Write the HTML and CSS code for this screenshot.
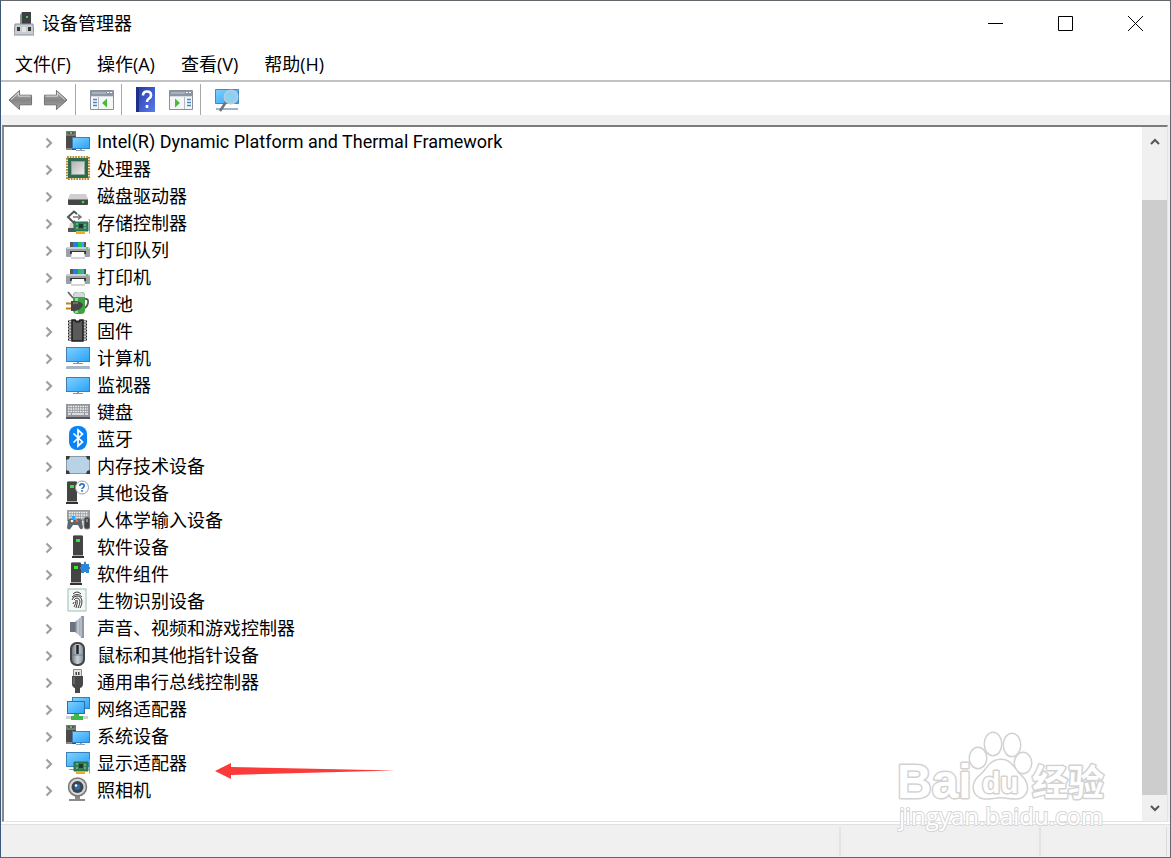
FILE: index.html
```html
<!DOCTYPE html>
<html lang="zh-CN">
<head>
    <meta charset="UTF-8">
    <title>设备管理器</title>
    <link rel="stylesheet" href="styles.css">
</head>
<body>
<svg class="defs" aria-hidden="true">
    <defs>
        <linearGradient id="screen" x1="0" y1="0" x2="1" y2="1">
            <stop offset="0" stop-color="#7fd0ff"/>
            <stop offset="1" stop-color="#2ba3f7"/>
        </linearGradient>
        <linearGradient id="metal" x1="0" y1="0" x2="1" y2="1">
            <stop offset="0" stop-color="#b4b4b4"/>
            <stop offset="1" stop-color="#ececec"/>
        </linearGradient>
        <linearGradient id="steel" x1="0" y1="0" x2="1" y2="0">
            <stop offset="0" stop-color="#6f7985"/>
            <stop offset="0.5" stop-color="#c9d0d8"/>
            <stop offset="1" stop-color="#8a939e"/>
        </linearGradient>
        <linearGradient id="arrow" x1="0" y1="0" x2="0" y2="1">
            <stop offset="0" stop-color="#b5b5b5"/>
            <stop offset="0.5" stop-color="#858585"/>
            <stop offset="1" stop-color="#a8a8a8"/>
        </linearGradient>
        <linearGradient id="help" x1="0" y1="0" x2="1" y2="1">
            <stop offset="0" stop-color="#2338a8"/>
            <stop offset="1" stop-color="#5a7be8"/>
        </linearGradient>
        <symbol id="i-chevron" viewBox="0 0 8 12">
            <path d="M1.5 1.5L6 6L1.5 10.5" fill="none" stroke="#a0a0a0" stroke-width="2.2"/>
        </symbol>
        <symbol id="i-system" viewBox="0 0 24 24">
            <path d="M0 2h10v19H0z" fill="#4a4a4a"/>
            <path d="M0 2h10v5H0z" fill="#777"/>
            <path d="M2 4h6" stroke="#333"/>
            <path d="M4 3h2v2H4z" fill="#4fd04f"/>
            <path d="M0 19h6v2H0z" fill="#888"/>
            <path d="M6 8h18v12H6z" fill="#3a7fb8"/>
            <path d="M7 9h16v10H7z" fill="url(#screen)"/>
            <path d="M14 20h2v1h3v1h-9v-1h4z" fill="#8aa0b4"/>
        </symbol>
        <symbol id="i-cpu" viewBox="0 0 24 24">
            <rect x="1" y="1" width="22" height="22" fill="none" stroke="#b8862a" stroke-width="2" stroke-dasharray="1.7 1.05"/>
            <rect x="2" y="2" width="20" height="20" fill="#2f6b4f"/>
            <rect x="5" y="5" width="14" height="14" fill="#8aa898"/>
            <rect x="6" y="6" width="12" height="12" fill="url(#metal)"/>
        </symbol>
        <symbol id="i-disk" viewBox="0 0 24 24">
            <path d="M4 11h16l2 5H2z" fill="#cfcfcf"/>
            <path d="M2 16h20v5q0 1-1 1H3q-1 0-1-1z" fill="#444"/>
            <path d="M2 16h20v1H2z" fill="#888"/>
            <circle cx="17" cy="19" r="1.3" fill="#3fe03f"/>
        </symbol>
        <symbol id="i-card" viewBox="0 0 24 24">
            <path d="M8 12h14v9H8z" fill="#2f8057"/>
            <path d="M8 12h14v9H8z" fill="none" stroke="#2a6e4a"/>
            <path d="M13 14h4v4h-4z" fill="#1d3b2b"/>
            <path d="M10 14h2M10 18h2M18 15h2M18 18h2" stroke="#9fd8b4"/>
            <path d="M10 21h9v3h-9z" fill="#f5a623"/>
            <path d="M22.5 9.500h1v14" fill="none" stroke="#9a9a9a"/>
        </symbol>
        <symbol id="i-storage" viewBox="0 0 24 24">
            <path d="M4 13h11v8H2z" fill="#d6d6d6"/>
            <path d="M2 18h9v4H2z" fill="#555"/>
            <path d="M11 4L8 1.500L2 7l5.500 5.500L9 11" fill="none" stroke="#555" stroke-width="2"/>
            <path d="M7 7h8M12 4.500L15 7l-3 2.500" fill="none" stroke="#777" stroke-width="1.500"/>
            <use href="#i-card"/>
        </symbol>
        <symbol id="i-printer" viewBox="0 0 24 24">
            <path d="M4 5h16v5H4z" fill="#555"/>
            <path d="M7 5h5v5H7z" fill="#1f7fe8"/>
            <path d="M12 5h3v5h-3z" fill="#2fbf4f"/>
            <path d="M15 5h3v5h-3z" fill="#36a5f5"/>
            <path d="M1 10h22l1 2v7q0 1-1 1H1q-1 0-1-1v-7z" fill="#9ca1a5"/>
            <path d="M1 10h22v2H1z" fill="#ccd0d2"/>
            <path d="M4 14h16v3H4z" fill="#333"/>
            <path d="M6 15h12l1 6H5z" fill="#fff"/>
            <path d="M5 21h14" stroke="#aaa"/>
            <path d="M20 10h2v2h-2z" fill="#3fe03f"/>
        </symbol>
        <symbol id="i-battery" viewBox="0 0 24 24">
            <path d="M18 8q5-1 4 4q-1 5-6 6" fill="none" stroke="#555" stroke-width="1.800"/>
            <path d="M2 1l5 6" stroke="#666" stroke-width="1.800"/>
            <rect x="7" y="1" width="12" height="22" rx="4" fill="#3da33f"/>
            <path d="M7 6q0-5 6-5t6 5z" fill="#d4d8e4"/>
            <path d="M9 7h3v15H9z" fill="#91dc84"/>
            <path d="M0 12.500h6M0 17.500h6" stroke="#b8841c" stroke-width="2"/>
            <path d="M5 10h4q6 0 8 4q-2 5-8 6H5z" fill="#454545"/>
            <path d="M7 12h5" stroke="#999"/>
        </symbol>
        <symbol id="i-firmware" viewBox="0 0 24 24">
            <path d="M2 3.500h19M2 6.500h19M2 9.500h19M2 12.500h19M2 15.500h19M2 18.500h19M2 21.500h19" stroke="#1c1c1c" stroke-width="2"/>
            <path d="M3 3.500h17M3 6.500h17M3 9.500h17M3 12.500h17M3 15.500h17M3 18.500h17M3 21.500h17" stroke="#c4c4c4"/>
            <path d="M6 2h3q0 2 2.500 2T14 2h3v21H6z" fill="#5a5a5a" stroke="#1c1c1c" stroke-width="1.500"/>
        </symbol>
        <symbol id="i-computer" viewBox="0 0 24 24">
            <path d="M0 2h24v15H0z" fill="#3a7fb8"/>
            <path d="M1 3h22v13H1z" fill="url(#screen)"/>
            <path d="M11 17h2v1h4v1H7v-1h4z" fill="#7f97ab"/>
            <path d="M1 21h22l1 1v2H0v-2z" fill="#a5b8c8"/>
        </symbol>
        <symbol id="i-monitor" viewBox="0 0 24 24">
            <path d="M0 5h24v15H0z" fill="#3a7fb8"/>
            <path d="M1 6h22v13H1z" fill="url(#screen)"/>
            <path d="M11 20h2v1h4v1H7v-1h4z" fill="#7f97ab"/>
        </symbol>
        <symbol id="i-keyboard" viewBox="0 0 24 24">
            <path d="M0 5h24v13H0z" fill="#90969c"/>
            <path d="M0 18h24v2H0z" fill="#50565c"/>
            <path d="M2 7.500h20M2 10h20M2 12.500h20" stroke="#f2f2f2" stroke-width="1.300" stroke-dasharray="1.600 0.800"/>
            <path d="M2 15h3M6 15h12M19 15h3" stroke="#f2f2f2" stroke-width="1.300"/>
        </symbol>
        <symbol id="i-bluetooth" viewBox="0 0 24 24">
            <rect x="3" y="0" width="18" height="24" rx="8" fill="#0a84f5"/>
            <path d="M7.500 7.500l9 8.500l-4.500 4V4l4.500 4l-9 8.500" fill="none" stroke="#fff" stroke-width="1.700"/>
        </symbol>
        <symbol id="i-memory" viewBox="0 0 24 24">
            <rect x="0.500" y="3.500" width="23" height="17" rx="1" fill="#b8d2e6" stroke="#8a9aa6"/>
            <path d="M0 3h4l-1 3l-3 1zM24 3h-4l1 3l3 1zM0 21h4l-1-3l-3-1zM24 21h-4l1-3l3-1z" fill="#3c3c3c"/>
        </symbol>
        <symbol id="i-tower" viewBox="0 0 24 24">
            <path d="M7 2h10v19H7z" fill="#444"/>
            <path d="M7 2h10l-1-1H8z" fill="#888"/>
            <path d="M6 22h12v2H6z" fill="#333"/>
            <path d="M7 21h10v1H7z" fill="#aaa"/>
            <path d="M10 5h4v3h-4z" fill="#35e835"/>
        </symbol>
        <symbol id="i-other" viewBox="0 0 24 24">
            <use href="#i-tower" x="-6"/>
            <circle cx="16" cy="7.500" r="6.500" fill="#fff" stroke="#9aa0a6"/>
            <path d="M13.800 6q0-2.200 2.200-2.200t2.200 2q0 1-1.100 1.800t-1.100 1.400M16 10v1.700" fill="none" stroke="#2878c8" stroke-width="1.700"/>
        </symbol>
        <symbol id="i-hid" viewBox="0 0 24 24">
            <path d="M1 3h23v11H1z" fill="#9a9fa5"/>
            <path d="M3 5.500h19M3 8h19M3 10.500h19" stroke="#f4f4f4" stroke-width="1.300" stroke-dasharray="1.600 0.800"/>
            <path d="M2 13q4-3 6 0h2q4-3 6 1l1 7q-2 3-4-1l-1-2H7l-2 3q-2 3-4 0z" fill="#5c666f"/>
            <circle cx="6" cy="14" r="1.300" fill="#fff"/>
            <circle cx="11" cy="14" r="1.300" fill="#e8643c"/>
            <path d="M6 9h3v3H6z" fill="#36a5f5"/>
            <rect x="18" y="10" width="6" height="12" rx="2.500" fill="#444" stroke="#888"/>
            <path d="M21 12v3" stroke="#ccc"/>
        </symbol>
        <symbol id="i-component" viewBox="0 0 24 24">
            <use href="#i-tower" x="-2"/>
            <path d="M15 3h3V1q1-1 2 0v2h3v3h1v2h-1v4h-3v-1h-2v1h-3V8h-1V6h1z" fill="#2b88d8"/>
        </symbol>
        <symbol id="i-finger" viewBox="0 0 24 24">
            <rect x="2" y="1" width="18" height="22" fill="#f4f8f7" stroke="#9cc0b8"/>
            <path d="M7 6q4-4 8 0M6 9q5-5 10 0M6 12q1-4 5-4t5 5q0 4-2 7M8 12q1-2 3-2t3 3q0 3-2 7M7 16l1-2M8 19q2-3 2-7M11 12q1 2-1 8" fill="none" stroke="#3c3c3c"/>
        </symbol>
        <symbol id="i-sound" viewBox="0 0 24 24">
            <path d="M4 7h5v10H4z" fill="#6a7480"/>
            <path d="M9 7l6-5v20l-6-5z" fill="url(#steel)"/>
            <path d="M15 1h3v22h-3z" fill="#8d98a4"/>
            <path d="M15 2v20" stroke="#d5dbe0"/>
        </symbol>
        <symbol id="i-mouse" viewBox="0 0 24 24">
            <rect x="4" y="0" width="15" height="24" rx="6.500" fill="#444"/>
            <rect x="6" y="2" width="11" height="20" rx="5" fill="url(#steel)"/>
            <path d="M6 13h11" stroke="#6f7c88"/>
            <path d="M11.500 3v9" stroke="#222" stroke-width="2.500"/>
        </symbol>
        <symbol id="i-usb" viewBox="0 0 24 24">
            <path d="M7.500 0.500h8V8h-8z" fill="#e4e4e4" stroke="#8a8a8a"/>
            <path d="M9.500 3h1.500v3H9.500zM12 3h1.500v3H12z" fill="#444"/>
            <path d="M6 7h11v8q0 3-3 4v5H9v-5q-3-1-3-4z" fill="#484848"/>
            <path d="M8 8v7" stroke="#888"/>
        </symbol>
        <symbol id="i-network" viewBox="0 0 24 24">
            <path d="M6 1h18v12H6z" fill="#3a7fb8"/>
            <path d="M7 2h16v10H7z" fill="url(#screen)"/>
            <path d="M1 5h18v13H1z" fill="#2a6fa8"/>
            <path d="M2 6h16v11H2z" fill="url(#screen)"/>
            <path d="M9 18h3v2h10v3H0v-3h9z" fill="#d2d2d2"/>
            <path d="M8 18h5v2h4v4H5v-4h3z" fill="#3fb84a"/>
        </symbol>
        <symbol id="i-display" viewBox="0 0 24 24">
            <path d="M0 2h24v15H0z" fill="#3a7fb8"/>
            <path d="M1 3h22v13H1z" fill="url(#screen)"/>
            <path d="M3 19h7v1H3z" fill="#8aa0b4"/>
            <use href="#i-card"/>
        </symbol>
        <symbol id="i-camera" viewBox="0 0 24 24">
            <path d="M9 18h5v4h5v2H3v-2h6z" fill="#8a8a8a"/>
            <circle cx="11.500" cy="10" r="9" fill="#d5d5d5" stroke="#777" stroke-width="1.500"/>
            <circle cx="11.500" cy="10" r="6" fill="#3c444c"/>
            <circle cx="11.500" cy="10" r="3" fill="#2b6ca8"/>
            <circle cx="10" cy="8.500" r="1.300" fill="#fff"/>
        </symbol>
        <symbol id="i-back" viewBox="0 0 26 22">
            <path d="M1 11L12 1v5h12.500v10H12v5z" fill="url(#arrow)" stroke="#6e6e6e" stroke-linejoin="round"/>
            <path d="M3 11l8-7.500V7h12.500" fill="none" stroke="#d8d8d8"/>
        </symbol>
        <symbol id="i-pane" viewBox="0 0 24 20">
            <path d="M0.500 0.500h23v19H0.500z" fill="#f4f6f8" stroke="#8a9098"/>
            <path d="M1 1h22v5H1z" fill="#8a96a6"/>
            <path d="M2 3h14" stroke="#c4ccd8"/>
            <path d="M17 2.500h2M20 2.500h2" stroke="#fff"/>
            <path d="M1 6.500h22" stroke="#d6dce2"/>
        </symbol>
    </defs>
</svg>

<div class="window">
    <header class="titlebar">
        <svg class="app-icon" viewBox="0 0 20 24" aria-hidden="true">
            <path d="M8 0h9v12H8z" fill="#3c4042"/>
            <path d="M6 3l2-3v12H6z" fill="#8a8e90"/>
            <path d="M12 4h2v2h-2z" fill="#3fdc3f"/>
            <path d="M1 12h18l1 11H0z" fill="#c9ccd0" stroke="#8d9196"/>
            <path d="M3 15h3v4H3zM14 15h3v4h-3z" fill="#383838"/>
            <path d="M8 15h4v5H8z" fill="#e2e4e6"/>
        </svg>
        <h1>设备管理器</h1>
        <div class="caption-buttons">
            <button type="button" aria-label="最小化"><svg viewBox="0 0 15 15"><path d="M0 7.500h15"/></svg></button>
            <button type="button" aria-label="最大化"><svg viewBox="0 0 15 15"><path d="M0.500 0.500h14v14H0.500z"/></svg></button>
            <button type="button" aria-label="关闭"><svg viewBox="0 0 15 15"><path d="M0 0l15 15M15 0L0 15"/></svg></button>
        </div>
    </header>

    <nav class="menubar">
        <button type="button">文件(F)</button>
        <button type="button">操作(A)</button>
        <button type="button">查看(V)</button>
        <button type="button">帮助(H)</button>
    </nav>

    <div class="toolbar">
        <div class="tool-group">
            <button type="button" aria-label="后退"><svg class="tool-arrow"><use href="#i-back"/></svg></button>
            <button type="button" aria-label="前进"><svg class="tool-arrow forward"><use href="#i-back"/></svg></button>
        </div>
        <div class="tool-group">
            <button type="button" aria-label="显示/隐藏控制台树">
                <svg class="tool-pane" viewBox="0 0 24 20">
                    <use href="#i-pane"/>
                    <path d="M8.500 7v12" stroke="#b4bac0"/>
                    <path d="M3 9.500h4M3 12.500h4M3 15.500h4" stroke="#4a86c8" stroke-width="1.500"/>
                    <path d="M12 13l5-4.500v9z" fill="#4cb83c"/>
                </svg>
            </button>
        </div>
        <div class="tool-group">
            <button type="button" aria-label="帮助">
                <svg class="tool-help" viewBox="0 0 19 25">
                    <path d="M0 0h19v25H0z" fill="url(#help)"/>
                    <path d="M0 0h3v25H0z" fill="#1d2f8c"/>
                    <path d="M7 8.500q0-4 4-4t4 3.700q0 2-2 3.300t-2 3.500M11 18v3" fill="none" stroke="#fff" stroke-width="2.600"/>
                </svg>
            </button>
            <button type="button" aria-label="显示/隐藏操作窗格">
                <svg class="tool-pane" viewBox="0 0 24 20">
                    <use href="#i-pane"/>
                    <path d="M15.500 7v12" stroke="#b4bac0"/>
                    <path d="M18 9.500h4M18 12.500h4M18 15.500h4" stroke="#4a86c8" stroke-width="1.500"/>
                    <path d="M6 8.500l5 4.500l-5 4.500z" fill="#4cb83c"/>
                </svg>
            </button>
        </div>
        <div class="tool-group">
            <button type="button" aria-label="扫描检测硬件改动">
                <svg class="tool-scan" viewBox="0 0 25 24">
                    <path d="M0.500 1.500h23v14H0.500z" fill="url(#screen)" stroke="#3a8cc4"/>
                    <path d="M1 20h22v2H1z" fill="#9fb4c4"/>
                    <path d="M11 14l-6 9" stroke="#6a7680" stroke-width="2.500"/>
                    <circle cx="16" cy="9" r="6.500" fill="#8cd0f4" stroke="#b4ccda" stroke-width="2"/>
                </svg>
            </button>
        </div>
    </div>

    <main class="panel">
        <ul class="tree">
            <li><button type="button" aria-label="展开"><svg><use href="#i-chevron"/></svg></button><svg class="icon"><use href="#i-system"/></svg><span class="latin">Intel(R) Dynamic Platform and Thermal Framework</span></li>
            <li><button type="button" aria-label="展开"><svg><use href="#i-chevron"/></svg></button><svg class="icon"><use href="#i-cpu"/></svg><span>处理器</span></li>
            <li><button type="button" aria-label="展开"><svg><use href="#i-chevron"/></svg></button><svg class="icon"><use href="#i-disk"/></svg><span>磁盘驱动器</span></li>
            <li><button type="button" aria-label="展开"><svg><use href="#i-chevron"/></svg></button><svg class="icon"><use href="#i-storage"/></svg><span>存储控制器</span></li>
            <li><button type="button" aria-label="展开"><svg><use href="#i-chevron"/></svg></button><svg class="icon"><use href="#i-printer"/></svg><span>打印队列</span></li>
            <li><button type="button" aria-label="展开"><svg><use href="#i-chevron"/></svg></button><svg class="icon"><use href="#i-printer"/></svg><span>打印机</span></li>
            <li><button type="button" aria-label="展开"><svg><use href="#i-chevron"/></svg></button><svg class="icon"><use href="#i-battery"/></svg><span>电池</span></li>
            <li><button type="button" aria-label="展开"><svg><use href="#i-chevron"/></svg></button><svg class="icon"><use href="#i-firmware"/></svg><span>固件</span></li>
            <li><button type="button" aria-label="展开"><svg><use href="#i-chevron"/></svg></button><svg class="icon"><use href="#i-computer"/></svg><span>计算机</span></li>
            <li><button type="button" aria-label="展开"><svg><use href="#i-chevron"/></svg></button><svg class="icon"><use href="#i-monitor"/></svg><span>监视器</span></li>
            <li><button type="button" aria-label="展开"><svg><use href="#i-chevron"/></svg></button><svg class="icon"><use href="#i-keyboard"/></svg><span>键盘</span></li>
            <li><button type="button" aria-label="展开"><svg><use href="#i-chevron"/></svg></button><svg class="icon"><use href="#i-bluetooth"/></svg><span>蓝牙</span></li>
            <li><button type="button" aria-label="展开"><svg><use href="#i-chevron"/></svg></button><svg class="icon"><use href="#i-memory"/></svg><span>内存技术设备</span></li>
            <li><button type="button" aria-label="展开"><svg><use href="#i-chevron"/></svg></button><svg class="icon"><use href="#i-other"/></svg><span>其他设备</span></li>
            <li><button type="button" aria-label="展开"><svg><use href="#i-chevron"/></svg></button><svg class="icon"><use href="#i-hid"/></svg><span>人体学输入设备</span></li>
            <li><button type="button" aria-label="展开"><svg><use href="#i-chevron"/></svg></button><svg class="icon"><use href="#i-tower"/></svg><span>软件设备</span></li>
            <li><button type="button" aria-label="展开"><svg><use href="#i-chevron"/></svg></button><svg class="icon"><use href="#i-component"/></svg><span>软件组件</span></li>
            <li><button type="button" aria-label="展开"><svg><use href="#i-chevron"/></svg></button><svg class="icon"><use href="#i-finger"/></svg><span>生物识别设备</span></li>
            <li><button type="button" aria-label="展开"><svg><use href="#i-chevron"/></svg></button><svg class="icon"><use href="#i-sound"/></svg><span>声音、视频和游戏控制器</span></li>
            <li><button type="button" aria-label="展开"><svg><use href="#i-chevron"/></svg></button><svg class="icon"><use href="#i-mouse"/></svg><span>鼠标和其他指针设备</span></li>
            <li><button type="button" aria-label="展开"><svg><use href="#i-chevron"/></svg></button><svg class="icon"><use href="#i-usb"/></svg><span>通用串行总线控制器</span></li>
            <li><button type="button" aria-label="展开"><svg><use href="#i-chevron"/></svg></button><svg class="icon"><use href="#i-network"/></svg><span>网络适配器</span></li>
            <li><button type="button" aria-label="展开"><svg><use href="#i-chevron"/></svg></button><svg class="icon"><use href="#i-system"/></svg><span>系统设备</span></li>
            <li class="marked">
                <button type="button" aria-label="展开"><svg><use href="#i-chevron"/></svg></button><svg class="icon"><use href="#i-display"/></svg><span>显示适配器</span>
                <svg class="pointer" viewBox="0 0 180 16" aria-hidden="true"><path d="M0 8L16 0v4l164 3.500L16 12v4z" fill="#fb3a3a"/></svg>
            </li>
            <li><button type="button" aria-label="展开"><svg><use href="#i-chevron"/></svg></button><svg class="icon"><use href="#i-camera"/></svg><span>照相机</span></li>
        </ul>
        <div class="scrollbar">
            <button type="button" aria-label="向上滚动"><svg viewBox="0 0 10 8"><path d="M1 6l4-4l4 4"/></svg></button>
            <div class="track"><div class="thumb"></div></div>
            <button type="button" aria-label="向下滚动"><svg viewBox="0 0 10 8"><path d="M1 2l4 4l4-4"/></svg></button>
        </div>
    </main>

    <footer class="statusbar">
        <div class="status-main"></div>
        <div class="status-cell"></div>
        <div class="status-cell last"></div>
    </footer>

    <svg class="watermark" viewBox="0 0 212 104">
        <g class="outline">
            <text class="wm-brand" x="0" y="68">Bai</text>
            <ellipse cx="81" cy="28" rx="8" ry="10"/>
            <ellipse cx="96" cy="14" rx="8" ry="11"/>
            <ellipse cx="115" cy="15" rx="8" ry="11"/>
            <ellipse cx="126" cy="33" rx="8" ry="10"/>
            <path d="M104 30C93 30 90 40 84 45C76 51 75 60 80 65C86 71 95 67 104 67C112 67 122 71 127 65C132 60 130 51 123 45C117 39 114 30 104 30z"/>
            <text class="wm-du" x="85" y="63">du</text>
            <text class="wm-cn" x="135" y="66">经验</text>
        </g>
        <text class="wm-url" x="2" y="95">jingyan.baidu.com</text>
    </svg>
</div>
</body>
</html>
```
FILE: styles.css
```css
* {
    box-sizing: border-box;
}
body {
    margin: 0;
    font-family: "Noto Sans CJK SC", sans-serif;
    font-size: 18px;
    color: #000;
}
button {
    display: flex;
    align-items: center;
    justify-content: center;
    padding: 0;
    border: none;
    background: none;
    font: inherit;
    color: inherit;
}
svg {
    display: block;
    flex: none;
}
.defs {
    position: absolute;
    width: 0;
    height: 0;
}
.window {
    position: relative;
    display: flex;
    flex-direction: column;
    min-height: 100vh;
    border: 1px solid #62686c;
    border-left-color: #3a5878;
    background: #f0f0f0;
}

/* title bar */
.titlebar {
    display: flex;
    align-items: center;
    height: 45px;
    padding-left: 13px;
    background: #fff;
}
.app-icon {
    width: 20px;
    height: 24px;
}
.titlebar h1 {
    flex: 1;
    margin: 0 0 3px 8px;
    font-size: 18px;
    font-weight: 400;
    line-height: 24px;
}
.caption-buttons {
    display: flex;
}
.caption-buttons button {
    width: 70px;
    height: 45px;
}
.caption-buttons svg {
    width: 15px;
    height: 15px;
    fill: none;
    stroke: #000;
}

/* menu */
.menubar {
    display: flex;
    gap: 26px;
    height: 36px;
    padding: 0 14px;
    border-bottom: 2px solid #c0c2c4;
    background: #fff;
}
.menubar button {
    font-family: "Open Sans", "Noto Sans CJK SC", sans-serif;
}

/* toolbar */
.toolbar {
    display: flex;
    align-items: center;
    height: 33px;
    padding: 2px 0 0 7px;
    background: #fff;
}
.tool-group {
    display: flex;
    align-items: center;
    gap: 14px;
    height: 31px;
    padding: 0 7px 0 14px;
    border-right: 1px solid #a8a8a8;
}
.tool-group:first-child {
    gap: 10px;
    padding-left: 0;
}
.tool-group:last-child {
    border-right: none;
}
.tool-arrow {
    width: 25px;
    height: 22px;
}
.forward {
    transform: scaleX(-1);
}
.tool-pane {
    width: 24px;
    height: 20px;
}
.tool-help {
    width: 19px;
    height: 25px;
}
.tool-scan {
    width: 25px;
    height: 24px;
}

/* device tree */
.panel {
    display: flex;
    flex: 1;
    margin: 10px 2px 0 1px;
    border: 1px solid #e3e3e3;
    border-top: 2px solid #7c7c7c;
    border-left: 2px solid #8a8a8a;
    background: #fff;
}
.tree {
    flex: 1;
    margin: 0;
    padding: 1px 0 17px 40px;
    list-style: none;
}
.tree li {
    display: flex;
    align-items: center;
    height: 27px;
    line-height: 27px;
}
.tree button {
    width: 10px;
    height: 27px;
    padding-top: 3px;
}
.tree button svg {
    width: 8px;
    height: 12px;
}
.icon {
    width: 24px;
    height: 24px;
    margin: 0 7px 1px 12px;
}
.latin {
    font-family: Roboto, "Open Sans", sans-serif;
}
.marked {
    position: relative;
}
.pointer {
    position: absolute;
    left: 171px;
    top: 14px;
    width: 180px;
    height: 16px;
}

/* scroll bar */
.scrollbar {
    display: flex;
    flex-direction: column;
    width: 25px;
    padding-top: 2px;
    background: #f0f0f0;
}
.scrollbar button {
    height: 26px;
}
.scrollbar svg {
    width: 10px;
    height: 8px;
    fill: none;
    stroke: #555;
    stroke-width: 2;
}
.track {
    display: flex;
    flex: 1;
    flex-direction: column;
    justify-content: flex-end;
}
.thumb {
    height: 93%;
    background: #cdcdcd;
}

/* status bar */
.statusbar {
    display: flex;
    height: 35px;
    padding: 3px 3px 1px 0;
    border-top: 2px solid #fff;
    box-shadow: inset 0 1px #e0e0e0;
}
.status-main {
    flex: 1;
}
.status-cell {
    width: 200px;
    border-left: 2px solid #e3e3e3;
}
.last {
    width: 128px;
    border-right: 1px solid #dcdcdc;
}

/* watermark over the lower right corner */
.watermark {
    position: absolute;
    right: 61px;
    bottom: 23px;
    width: 212px;
    height: 104px;
    font-family: "Liberation Sans", "Noto Sans CJK SC", sans-serif;
    font-weight: 700;
}
.outline {
    fill: #fff;
    stroke: #d2d2d2;
    stroke-width: 3;
    stroke-linejoin: round;
    paint-order: stroke;
}
.wm-brand {
    font-size: 48px;
}
.wm-du {
    font-size: 30px;
}
.wm-cn {
    font-size: 36px;
}
.wm-url {
    font-family: "Open Sans", sans-serif;
    font-size: 24px;
    font-weight: 400;
    fill: #fff;
    stroke: #d6d6d6;
    stroke-width: 2;
    paint-order: stroke;
}
```
